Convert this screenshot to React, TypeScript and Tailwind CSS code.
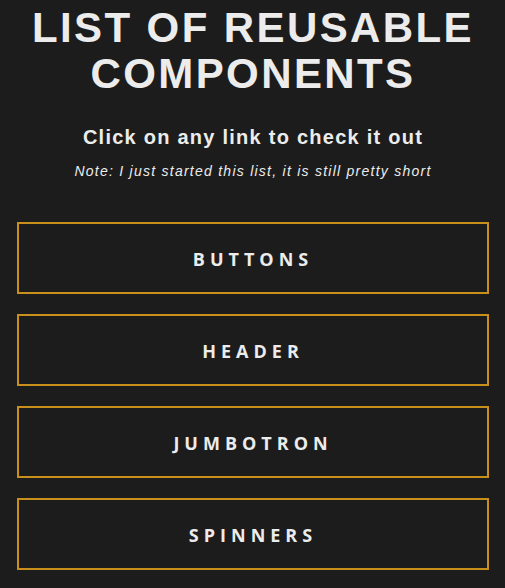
const links = ["Buttons", "Header", "Jumbotron", "Spinners"];

export default function App() {
  return (
    <div className="min-h-[588px] bg-[#1c1c1c] text-[#ececec] pl-[17px] pr-[16px] pb-5">
      <h1 className="pt-[5px] text-center font-['Liberation_Sans',Arial,sans-serif] text-[42px] font-bold uppercase leading-[46px] tracking-[2.4px]">
        List of reusable components
      </h1>
      <h3 className="mt-[28px] text-center font-['Liberation_Sans',Arial,sans-serif] text-[20px] font-bold leading-6 tracking-[1.25px]">
        Click on any link to check it out
      </h3>
      <p className="mt-[12px] text-center font-['Liberation_Sans',Arial,sans-serif] text-[14px] italic leading-5 tracking-[1.25px]">
        Note: I just started this list, it is still pretty short
      </p>
      <div className="mt-[41px] flex flex-col gap-[20px]">
        {links.map((l) => (
          <a
            key={l}
            href="#"
            className="flex h-[72px] items-center justify-center border-2 border-[#c8901a] pt-[3px] font-['Open_Sans',sans-serif] text-[18px] font-bold uppercase tracking-[5px] text-[#ececec]"
          >
            {l}
          </a>
        ))}
      </div>
    </div>
  );
}
